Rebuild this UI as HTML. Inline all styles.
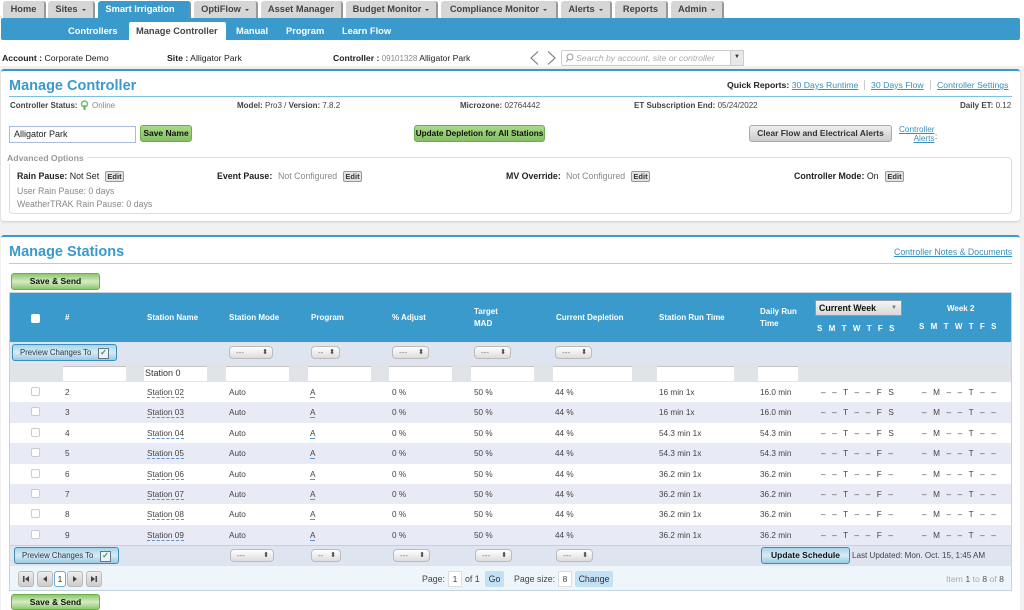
<!DOCTYPE html>
<html><head><meta charset="utf-8"><style>
html,body{margin:0;padding:0}
body{width:1024px;height:610px;overflow:hidden;background:#fff;position:relative;font-family:"Liberation Sans",sans-serif;font-size:8.8px;color:#444}
#w{position:absolute;left:0;top:0;width:1024px;height:610px;filter:blur(.3px)}
.a,.t,.b{position:absolute;white-space:nowrap}
.t{line-height:12px}
.tab{position:absolute;top:1px;height:17px;background:#d6d6d6;border-radius:3px 3px 0 0;border-right:2px solid #999;box-sizing:border-box;text-align:center;font-weight:bold;font-size:9.3px;line-height:17px;color:#444;white-space:nowrap}
.tab s{display:inline-block;width:0;height:0;border-left:2px solid transparent;border-right:2px solid transparent;border-top:2.500px solid #444;margin-left:4px;vertical-align:1px}
.sub{position:absolute;top:22px;line-height:18px;height:18px;font-weight:bold;font-size:9.300px;color:#fff}
b{color:#222}
.lnk{color:#3a8fb8;text-decoration:underline}
.h{position:absolute;font-weight:bold;font-size:14.5px;color:#3a9acb;line-height:18px}
.g{position:absolute;background:linear-gradient(#a9d98a,#84c063);border:1px solid #6fae4f;border-radius:3px;box-sizing:border-box;text-align:center;font-weight:bold;color:#111;font-size:8.5px}
.e{position:absolute;width:19px;height:11px;background:#e4e4e4;border:1px solid #999;border-radius:2px;box-sizing:border-box;text-align:center;font-weight:bold;font-size:7.500px;line-height:9px;color:#333}
.gr{color:#888}
.th{position:absolute;color:#fff;font-weight:bold;font-size:8px;line-height:12px;white-space:nowrap}
.s{position:absolute;height:13px;background:linear-gradient(#fff,#ddd);border:1px solid #bbb;border-radius:4px;box-sizing:border-box;font-size:8px;line-height:11px;color:#777;padding-left:6px}
.s:after{content:"⬍";position:absolute;right:4px;top:0;font-size:7px;color:#444}
.i{position:absolute;top:366px;height:15px;background:#fff;border-top:1px solid #c4c4c4;box-sizing:border-box}
.r{position:absolute;left:10px;width:1001px;height:20.4px}
.r.o{background:#e8ebf5}
.r span{position:absolute;top:5px;line-height:12px;white-space:nowrap;font-size:8.2px;color:#444}
.r span.d{left:811px;word-spacing:4.300px}
.r span.k{left:912px;word-spacing:4.300px}
.r i{position:absolute;left:21px;top:5px;width:9px;height:9px;background:#fff;border:1px solid #ccc;border-radius:2px;box-sizing:border-box}
.r u{text-decoration:none;border-bottom:1px dashed #5a8fd0}
.pv{position:absolute;height:17px;background:linear-gradient(#a8d4e8,#d5ebf5 50%,#9ccbe2);border:1px solid #3a8fb8;border-radius:3px;box-sizing:border-box;font-size:7.800px;line-height:15px;color:#334;padding-left:7px;white-space:nowrap}
.pv em{position:absolute;right:7px;top:3px;width:9px;height:9px;background:#eef;border:1px solid #678;color:#2a2;font-style:normal;font-weight:bold;font-size:8px;line-height:8px;text-align:center}
.pg{position:absolute;top:571px;width:16px;height:16px;background:linear-gradient(#eee,#ccc);border:1px solid #bbb;border-radius:3px;box-sizing:border-box;text-align:center;font-size:8.500px;line-height:14px;color:#333}
.pg svg{position:absolute;left:3px;top:3px}
</style></head><body><div id="w">
<div class="a" style="left:0;top:0;width:1024px;height:610px;background:#fff"></div>
<div class="a" style="left:0;top:66px;width:1024px;height:544px;background:#f1f1f1"></div>

<div class="tab" style="left:3px;width:43px">Home</div>
<div class="tab" style="left:48px;width:47px">Sites<s></s></div>
<div class="tab" style="left:98px;width:93px;background:#3a9acb;color:#fff;border-right-color:#888;padding-right:7px">Smart Irrigation</div>
<div class="tab" style="left:194px;width:64px">OptiFlow<s></s></div>
<div class="tab" style="left:261px;width:82px">Asset Manager</div>
<div class="tab" style="left:346px;width:92px">Budget Monitor<s></s></div>
<div class="tab" style="left:441px;width:117px">Compliance Monitor<s></s></div>
<div class="tab" style="left:561px;width:51px">Alerts<s></s></div>
<div class="tab" style="left:615px;width:53px">Reports</div>
<div class="tab" style="left:671px;width:53px">Admin<s></s></div>

<div class="a" style="left:1px;top:18px;width:1019px;height:22px;background:#3a9acb;border-radius:2px"></div>
<div class="sub" style="left:68px">Controllers</div>
<div class="a" style="left:129px;top:22px;width:97px;height:18px;background:#fff;border-radius:2px 2px 0 0"></div>
<div class="sub" style="left:136px;color:#444">Manage Controller</div>
<div class="sub" style="left:236px">Manual</div>
<div class="sub" style="left:286px">Program</div>
<div class="sub" style="left:342px">Learn Flow</div>

<div class="t" style="left:2px;top:52px;color:#222;font-size:8.700px"><b>Account :</b> Corporate Demo</div>
<div class="t" style="left:167px;top:52px;color:#222;font-size:8.700px"><b>Site :</b> Alligator Park</div>
<div class="t" style="left:333px;top:52px;color:#222;font-size:8.600px"><b>Controller :</b> <span style="color:#888;font-size:8px">09101328</span> Alligator Park</div>
<svg class="a" style="left:529px;top:50px" width="28" height="16" fill="none" stroke="#777" stroke-width="1.1"><path d="M9 1.500 2 8l7 6.500M19 1.500 26 8l-7 6.500"/></svg>
<div class="a" style="left:561px;top:50px;width:183px;height:16px;background:#fff;border:1px solid #ccc;border-radius:2px;box-sizing:border-box"></div>
<div class="a" style="left:730px;top:50px;width:14px;height:16px;background:#e8e8e8;border:1px solid #ccc;box-sizing:border-box;text-align:center;font-size:6px;line-height:13px;color:#333">▼</div>
<svg class="a" style="left:565px;top:53px" width="9" height="10" fill="none" stroke="#999" stroke-width="1"><circle cx="5" cy="4" r="3"/><path d="M3 6.500 1 9"/></svg>
<div class="t" style="left:576px;top:52px;color:#aaa;font-style:italic;font-size:8.700px">Search by account, site or controller</div>

<div class="a" style="left:1px;top:69px;width:1019px;height:152px;background:#fff;border-top:2px solid #3a9acb;border-radius:3px;box-sizing:border-box;box-shadow:0 1px 2px #ccc"></div>
<div class="h" style="left:9px;top:77px">Manage Controller</div>
<div class="a" style="left:9px;top:96px;width:1003px;height:1px;background:#7cc0e2"></div>
<div class="t" style="left:727px;top:79px;font-size:8.700px"><b>Quick Reports:</b> <span class="lnk">30 Days Runtime</span></div>
<div class="a" style="left:864px;top:80px;width:1px;height:10px;background:#ccc"></div>
<div class="t lnk" style="left:871px;top:79px;font-size:8.700px">30 Days Flow</div>
<div class="a" style="left:930px;top:80px;width:1px;height:10px;background:#ccc"></div>
<div class="t lnk" style="left:937px;top:79px;font-size:8.700px">Controller Settings</div>

<div class="t" style="left:10px;top:100px;font-size:8px"><b style="color:#444">Controller Status:</b></div>
<svg class="a" style="left:80px;top:100px" width="9" height="10"><path d="M4.500 5v5" stroke="#6a6" stroke-width="2"/><circle cx="4.500" cy="4" r="3" fill="none" stroke="#7b7" stroke-width="1.500"/></svg>
<div class="t gr" style="left:92px;top:100px;font-size:8px">Online</div>
<div class="t" style="left:237px;top:100px;font-size:8px"><b style="color:#444">Model:</b> Pro3 / <b style="color:#444">Version:</b> 7.8.2</div>
<div class="t" style="left:460px;top:100px;font-size:8px"><b style="color:#444">Microzone:</b> 02764442</div>
<div class="t" style="left:634px;top:100px;font-size:8px"><b style="color:#444">ET Subscription End:</b> 05/24/2022</div>
<div class="t" style="left:960px;top:100px;font-size:8px"><b style="color:#444">Daily ET:</b> 0.12</div>

<div class="a" style="left:9px;top:126px;width:127px;height:17px;border:1px solid #a9bcdc;box-sizing:border-box;background:#fff;font-size:9px;line-height:15px;padding-left:4px;color:#222">Alligator Park</div>
<div class="g" style="left:140px;top:125px;width:52px;height:17px;line-height:14px">Save Name</div>
<div class="g" style="left:414px;top:125px;width:131px;height:17px;line-height:15px;font-size:8.200px">Update Depletion for All Stations</div>
<div class="a" style="left:749px;top:125px;width:143px;height:17px;background:linear-gradient(#eee,#ccc);border:1px solid #aaa;border-radius:3px;box-sizing:border-box;text-align:center;font-weight:bold;font-size:8.500px;line-height:15px;color:#333">Clear Flow and Electrical Alerts</div>
<div class="t lnk" style="left:899px;top:124.500px;line-height:9.500px;text-align:right;font-size:8.200px">Controller<br>Alerts</div>
<div class="t" style="left:935px;top:131px;font-size:8px">:</div>

<div class="a" style="left:9px;top:157px;width:1003px;height:57px;border:1px solid #ddd;border-radius:4px;box-sizing:border-box"></div>
<div class="t" style="left:4px;top:152px;background:#fff;padding:0 3px;color:#999;font-weight:bold;font-size:8.700px">Advanced Options</div>
<div class="t" style="left:17px;top:170px;color:#222;font-size:8.800px"><b>Rain Pause:</b> Not Set</div>
<div class="e" style="left:105px;top:171px">Edit</div>
<div class="t gr" style="left:17px;top:184.500px;font-size:8.800px">User Rain Pause: 0 days</div>
<div class="t gr" style="left:17px;top:198px;font-size:8.800px">WeatherTRAK Rain Pause: 0 days</div>
<div class="t" style="left:217px;top:170px;font-size:8.800px"><b>Event Pause:</b></div>
<div class="t gr" style="left:278px;top:170px;font-size:8.800px">Not Configured</div>
<div class="e" style="left:343px;top:171px">Edit</div>
<div class="t" style="left:506px;top:170px;font-size:8.800px"><b>MV Override:</b></div>
<div class="t gr" style="left:566px;top:170px;font-size:8.800px">Not Configured</div>
<div class="e" style="left:631px;top:171px">Edit</div>
<div class="t" style="left:794px;top:170px;color:#222;font-size:8.800px"><b>Controller Mode:</b> On</div>
<div class="e" style="left:885px;top:171px">Edit</div>

<div class="a" style="left:1px;top:235px;width:1019px;height:375px;background:#fff;border-top:2px solid #3a9acb;border-radius:3px 3px 0 0;box-sizing:border-box"></div>
<div class="h" style="left:9px;top:243px">Manage Stations</div>
<div class="a" style="left:9px;top:263px;width:1003px;height:1px;background:#a6d3ea"></div>
<div class="t lnk" style="left:894px;top:246px;font-size:8.750px">Controller Notes &amp; Documents</div>
<div class="g" style="left:11px;top:273px;width:89px;height:17px;line-height:15px;background:linear-gradient(#8cc86c,#d5ecc4 50%,#8cc86c)">Save &amp; Send</div>

<div class="a" style="left:9px;top:292px;width:1003px;height:299px;background:#fff;border:1px solid #c5d5e0;box-sizing:border-box"></div>
<div class="a" style="left:10px;top:293px;width:1001px;height:49px;background:#3a9acb"></div>
<div class="a" style="left:31px;top:314px;width:9px;height:9px;background:#fff;border-radius:2px"></div>
<div class="th" style="left:65px;top:312px">#</div>
<div class="th" style="left:147px;top:312px">Station Name</div>
<div class="th" style="left:229px;top:312px">Station Mode</div>
<div class="th" style="left:311px;top:312px">Program</div>
<div class="th" style="left:392px;top:312px">% Adjust</div>
<div class="th" style="left:474px;top:306px">Target<br>MAD</div>
<div class="th" style="left:556px;top:312px">Current Depletion</div>
<div class="th" style="left:659px;top:312px">Station Run Time</div>
<div class="th" style="left:760px;top:306px">Daily Run<br>Time</div>
<div class="a" style="left:815px;top:300px;width:87px;height:16px;background:linear-gradient(#f4f4f4,#d8d8d8);border:1px solid #999;box-sizing:border-box;font-weight:bold;font-size:8.800px;line-height:14px;padding-left:3px;color:#111">Current Week<span style="position:absolute;right:4px;font-size:6px;color:#777">▼</span></div>
<div class="th" style="left:947px;top:303px">Week 2</div>
<div class="th" style="left:817px;top:323px;word-spacing:3.500px;letter-spacing:.3px">S M T W T F S</div>
<div class="th" style="left:919px;top:321px;word-spacing:3.500px;letter-spacing:.3px">S M T W T F S</div>

<div class="a" style="left:10px;top:342px;width:1001px;height:21.500px;background:#dfe4f1"></div>
<div class="pv" style="left:12px;top:344px;width:105px">Preview Changes To<em>✓</em></div>
<div class="s" style="left:229px;top:346px;width:44px">---</div>
<div class="s" style="left:311px;top:346px;width:29px">--</div>
<div class="s" style="left:392px;top:346px;width:37px">---</div>
<div class="s" style="left:474px;top:346px;width:37px">---</div>
<div class="s" style="left:555px;top:346px;width:37px">---</div>

<div class="a" style="left:10px;top:363.500px;width:1001px;height:18.500px;background:#e0e4e8"></div>
<div class="i" style="left:63px;width:63px"></div>
<div class="i" style="left:144px;width:63px;font-size:9px;line-height:13px;padding-left:1px;color:#333">Station 0</div>
<div class="i" style="left:226px;width:63px"></div>
<div class="i" style="left:308px;width:63px"></div>
<div class="i" style="left:389px;width:63px"></div>
<div class="i" style="left:471px;width:63px"></div>
<div class="i" style="left:553px;width:79px"></div>
<div class="i" style="left:657px;width:77px"></div>
<div class="i" style="left:758px;width:40px"></div>

<div class="r" style="top:382px"><i></i><span style="left:55px">2</span><span style="left:137px"><u>Station 02</u></span><span style="left:219px">Auto</span><span style="left:300px"><u>A</u></span><span style="left:382px">0 %</span><span style="left:464px">50 %</span><span style="left:545px">44 %</span><span style="left:649px">16 min 1x</span><span style="left:750px">16.0 min</span><span class="d">– – T – – F S</span><span class="k">– M – – T – –</span></div>
<div class="r o" style="top:402.400px"><i></i><span style="left:55px">3</span><span style="left:137px"><u>Station 03</u></span><span style="left:219px">Auto</span><span style="left:300px"><u>A</u></span><span style="left:382px">0 %</span><span style="left:464px">50 %</span><span style="left:545px">44 %</span><span style="left:649px">16 min 1x</span><span style="left:750px">16.0 min</span><span class="d">– – T – – F S</span><span class="k">– M – – T – –</span></div>
<div class="r" style="top:422.800px"><i></i><span style="left:55px">4</span><span style="left:137px"><u>Station 04</u></span><span style="left:219px">Auto</span><span style="left:300px"><u>A</u></span><span style="left:382px">0 %</span><span style="left:464px">50 %</span><span style="left:545px">44 %</span><span style="left:649px">54.3 min 1x</span><span style="left:750px">54.3 min</span><span class="d">– – T – – F S</span><span class="k">– M – – T – –</span></div>
<div class="r o" style="top:443.200px"><i></i><span style="left:55px">5</span><span style="left:137px"><u>Station 05</u></span><span style="left:219px">Auto</span><span style="left:300px"><u>A</u></span><span style="left:382px">0 %</span><span style="left:464px">50 %</span><span style="left:545px">44 %</span><span style="left:649px">54.3 min 1x</span><span style="left:750px">54.3 min</span><span class="d">– – T – – F –</span><span class="k">– M – – T – –</span></div>
<div class="r" style="top:463.600px"><i></i><span style="left:55px">6</span><span style="left:137px"><u>Station 06</u></span><span style="left:219px">Auto</span><span style="left:300px"><u>A</u></span><span style="left:382px">0 %</span><span style="left:464px">50 %</span><span style="left:545px">44 %</span><span style="left:649px">36.2 min 1x</span><span style="left:750px">36.2 min</span><span class="d">– – T – – F –</span><span class="k">– M – – T – –</span></div>
<div class="r o" style="top:484px"><i></i><span style="left:55px">7</span><span style="left:137px"><u>Station 07</u></span><span style="left:219px">Auto</span><span style="left:300px"><u>A</u></span><span style="left:382px">0 %</span><span style="left:464px">50 %</span><span style="left:545px">44 %</span><span style="left:649px">36.2 min 1x</span><span style="left:750px">36.2 min</span><span class="d">– – T – – F –</span><span class="k">– M – – T – –</span></div>
<div class="r" style="top:504.400px"><i></i><span style="left:55px">8</span><span style="left:137px"><u>Station 08</u></span><span style="left:219px">Auto</span><span style="left:300px"><u>A</u></span><span style="left:382px">0 %</span><span style="left:464px">50 %</span><span style="left:545px">44 %</span><span style="left:649px">36.2 min 1x</span><span style="left:750px">36.2 min</span><span class="d">– – T – – F –</span><span class="k">– M – – T – –</span></div>
<div class="r o" style="top:524.800px"><i></i><span style="left:55px">9</span><span style="left:137px"><u>Station 09</u></span><span style="left:219px">Auto</span><span style="left:300px"><u>A</u></span><span style="left:382px">0 %</span><span style="left:464px">50 %</span><span style="left:545px">44 %</span><span style="left:649px">36.2 min 1x</span><span style="left:750px">36.2 min</span><span class="d">– – T – – F –</span><span class="k">– M – – T – –</span></div>

<div class="a" style="left:10px;top:545px;width:1001px;height:21px;background:#dfe4f1;border-top:1px solid #c5d0dc;box-sizing:border-box"></div>
<div class="pv" style="left:14px;top:547px;width:105px">Preview Changes To<em>✓</em></div>
<div class="s" style="left:230px;top:549px;width:44px">---</div>
<div class="s" style="left:311px;top:549px;width:30px">--</div>
<div class="s" style="left:393px;top:549px;width:37px">---</div>
<div class="s" style="left:475px;top:549px;width:37px">---</div>
<div class="s" style="left:556px;top:549px;width:37px">---</div>
<div class="pv" style="left:761px;top:547px;width:89px;padding:0;text-align:center;font-weight:bold;font-size:8.500px;color:#111">Update Schedule</div>
<div class="t" style="left:852px;top:550px;font-size:8.100px">Last Updated: Mon. Oct. 15, 1:45 AM</div>

<div class="a" style="left:10px;top:566px;width:1001px;height:24px;background:#eef6fc"></div>
<div class="pg" style="left:18px"><svg width="8" height="8" fill="#444"><path d="M1 1h1.500v6H1zM7 1v6L3 4z"/></svg></div>
<div class="pg" style="left:37px"><svg width="8" height="8" fill="#444"><path d="M6 1v6L2 4z"/></svg></div>
<div class="pg" style="left:54px;width:12px;background:#fff;border-color:#6aa8dc">1</div>
<div class="pg" style="left:67px"><svg width="8" height="8" fill="#444"><path d="M2 1v6l4-3z"/></svg></div>
<div class="pg" style="left:86px"><svg width="8" height="8" fill="#444"><path d="M1 1v6l4-3zM5.500 1H7v6H5.500z"/></svg></div>
<div class="t" style="left:422px;top:573px;font-size:8.800px">Page:</div>
<div class="a" style="left:448px;top:571px;width:14px;height:16px;background:#fff;border:1px solid #ddd;box-sizing:border-box;text-align:center;font-size:8.500px;line-height:15px">1</div>
<div class="t" style="left:465px;top:573px;font-size:8.800px">of 1</div>
<div class="a" style="left:485px;top:571px;width:19px;height:16px;background:#c3e1f5;border-radius:2px;text-align:center;font-size:8.800px;line-height:16px;color:#333">Go</div>
<div class="t" style="left:514px;top:573px;font-size:8.800px">Page size:</div>
<div class="a" style="left:558px;top:571px;width:14px;height:16px;background:#fff;border:1px solid #ddd;box-sizing:border-box;text-align:center;font-size:8.500px;line-height:15px">8</div>
<div class="a" style="left:575px;top:571px;width:38px;height:16px;background:#c3e1f5;border-radius:2px;text-align:center;font-size:8.800px;line-height:16px;color:#333">Change</div>
<div class="t" style="left:946px;top:573px;font-size:8.700px;color:#aaa">Item <span style="color:#555">1</span> to <span style="color:#555">8</span> of <span style="color:#555">8</span></div>

<div class="g" style="left:11px;top:594px;width:89px;height:16px;line-height:14px;background:linear-gradient(#8cc86c,#d5ecc4 50%,#8cc86c)">Save &amp; Send</div>
</div></body></html>
